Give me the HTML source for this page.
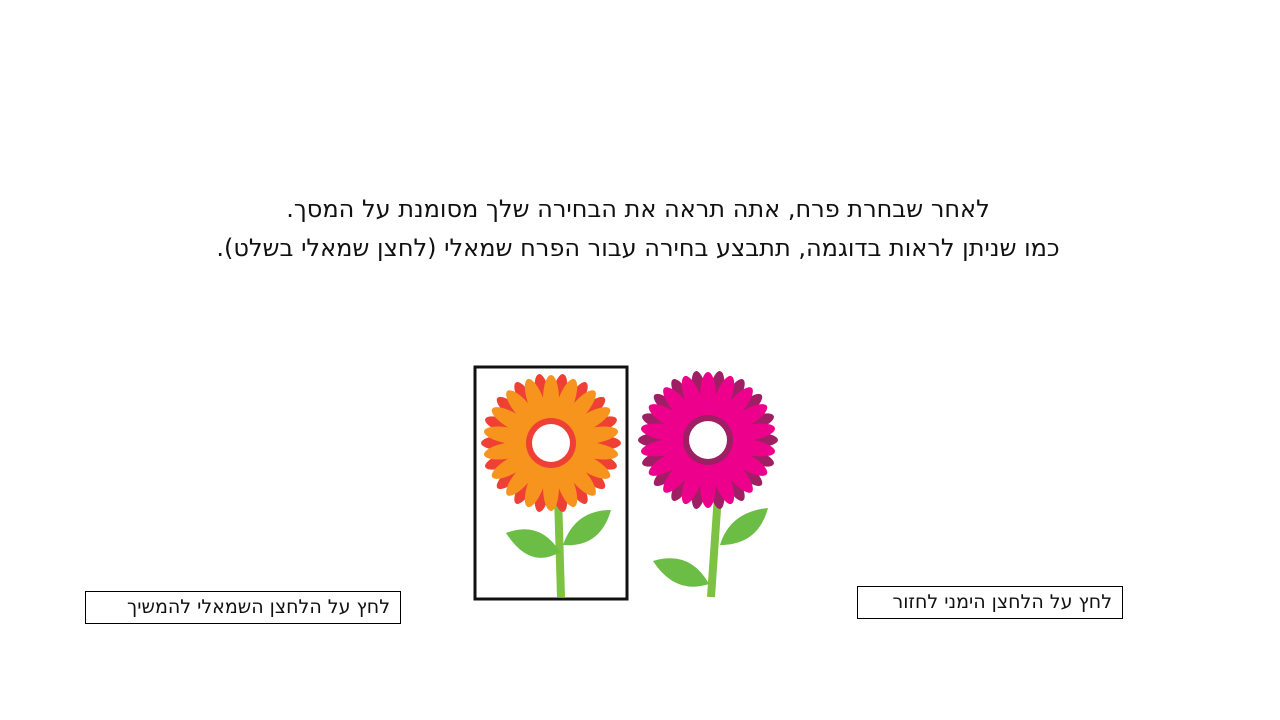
<!DOCTYPE html>
<html><head><meta charset="utf-8"><style>
body{margin:0;width:1280px;height:720px;background:#fff;position:relative;overflow:hidden;font-family:"DejaVu Sans","Liberation Sans",sans-serif;color:#111}
.t{position:absolute;left:0;width:1276px;text-align:center;direction:rtl;font-size:24px}
.b{position:absolute;border:1px solid #000;direction:rtl;font-size:19px;box-sizing:border-box;padding-right:10px;line-height:30px}
</style></head><body>
<div class="t" style="top:195px">לאחר שבחרת פרח, אתה תראה את הבחירה שלך מסומנת על המסך.</div>
<div class="t" style="top:234px">כמו שניתן לראות בדוגמה, תתבצע בחירה עבור הפרח שמאלי (לחצן שמאלי בשלט).</div>
<div class="b" style="left:85px;top:591px;width:316px;height:33px">לחץ על הלחצן השמאלי להמשיך</div>
<div class="b" style="left:857px;top:586px;width:266px;height:33px">לחץ על הלחצן הימני לחזור</div>
<svg width="1280" height="720" style="position:absolute;left:0;top:0">
<rect x="475" y="367" width="152" height="232" fill="none" stroke="#111" stroke-width="3"/>
<path d="M558 495 L561 597" stroke="#7dc242" stroke-width="8"/>
<path d="M506 533 Q540 520 560 552 Q530 570 506 533Z" fill="#6cbd45"/>
<path d="M563 545 Q575 510 611 510 Q600 548 563 545Z" fill="#6cbd45"/>
<path d="M718 495 L711 597" stroke="#7dc242" stroke-width="8"/>
<path d="M653 561 Q690 550 709 584 Q675 595 653 561Z" fill="#6cbd45"/>
<path d="M720 545 Q730 512 768 508 Q758 545 720 545Z" fill="#6cbd45"/>
<g transform="translate(551,443)">
<g fill="#ee4035">
<ellipse rx="7" ry="20" cy="-50" transform="rotate(10)"/><ellipse rx="7" ry="20" cy="-50" transform="rotate(30)"/><ellipse rx="7" ry="20" cy="-50" transform="rotate(50)"/><ellipse rx="7" ry="20" cy="-50" transform="rotate(70)"/><ellipse rx="7" ry="20" cy="-50" transform="rotate(90)"/><ellipse rx="7" ry="20" cy="-50" transform="rotate(110)"/><ellipse rx="7" ry="20" cy="-50" transform="rotate(130)"/><ellipse rx="7" ry="20" cy="-50" transform="rotate(150)"/><ellipse rx="7" ry="20" cy="-50" transform="rotate(170)"/><ellipse rx="7" ry="20" cy="-50" transform="rotate(190)"/><ellipse rx="7" ry="20" cy="-50" transform="rotate(210)"/><ellipse rx="7" ry="20" cy="-50" transform="rotate(230)"/><ellipse rx="7" ry="20" cy="-50" transform="rotate(250)"/><ellipse rx="7" ry="20" cy="-50" transform="rotate(270)"/><ellipse rx="7" ry="20" cy="-50" transform="rotate(290)"/><ellipse rx="7" ry="20" cy="-50" transform="rotate(310)"/><ellipse rx="7" ry="20" cy="-50" transform="rotate(330)"/><ellipse rx="7" ry="20" cy="-50" transform="rotate(350)"/>
</g>
<g fill="#f7941d">
<circle r="34"/>
<ellipse rx="8" ry="24" cy="-44" transform="rotate(0)"/><ellipse rx="8" ry="24" cy="-44" transform="rotate(20)"/><ellipse rx="8" ry="24" cy="-44" transform="rotate(40)"/><ellipse rx="8" ry="24" cy="-44" transform="rotate(60)"/><ellipse rx="8" ry="24" cy="-44" transform="rotate(80)"/><ellipse rx="8" ry="24" cy="-44" transform="rotate(100)"/><ellipse rx="8" ry="24" cy="-44" transform="rotate(120)"/><ellipse rx="8" ry="24" cy="-44" transform="rotate(140)"/><ellipse rx="8" ry="24" cy="-44" transform="rotate(160)"/><ellipse rx="8" ry="24" cy="-44" transform="rotate(180)"/><ellipse rx="8" ry="24" cy="-44" transform="rotate(200)"/><ellipse rx="8" ry="24" cy="-44" transform="rotate(220)"/><ellipse rx="8" ry="24" cy="-44" transform="rotate(240)"/><ellipse rx="8" ry="24" cy="-44" transform="rotate(260)"/><ellipse rx="8" ry="24" cy="-44" transform="rotate(280)"/><ellipse rx="8" ry="24" cy="-44" transform="rotate(300)"/><ellipse rx="8" ry="24" cy="-44" transform="rotate(320)"/><ellipse rx="8" ry="24" cy="-44" transform="rotate(340)"/>
</g>
<circle r="25" fill="#ee4035"/><circle r="19" fill="#fff"/>
</g>
<g transform="translate(708,440)">
<g fill="#9e1f63">
<ellipse rx="7" ry="20" cy="-50" transform="rotate(10)"/><ellipse rx="7" ry="20" cy="-50" transform="rotate(30)"/><ellipse rx="7" ry="20" cy="-50" transform="rotate(50)"/><ellipse rx="7" ry="20" cy="-50" transform="rotate(70)"/><ellipse rx="7" ry="20" cy="-50" transform="rotate(90)"/><ellipse rx="7" ry="20" cy="-50" transform="rotate(110)"/><ellipse rx="7" ry="20" cy="-50" transform="rotate(130)"/><ellipse rx="7" ry="20" cy="-50" transform="rotate(150)"/><ellipse rx="7" ry="20" cy="-50" transform="rotate(170)"/><ellipse rx="7" ry="20" cy="-50" transform="rotate(190)"/><ellipse rx="7" ry="20" cy="-50" transform="rotate(210)"/><ellipse rx="7" ry="20" cy="-50" transform="rotate(230)"/><ellipse rx="7" ry="20" cy="-50" transform="rotate(250)"/><ellipse rx="7" ry="20" cy="-50" transform="rotate(270)"/><ellipse rx="7" ry="20" cy="-50" transform="rotate(290)"/><ellipse rx="7" ry="20" cy="-50" transform="rotate(310)"/><ellipse rx="7" ry="20" cy="-50" transform="rotate(330)"/><ellipse rx="7" ry="20" cy="-50" transform="rotate(350)"/>
</g>
<g fill="#ec008c">
<circle r="34"/>
<ellipse rx="8" ry="24" cy="-44" transform="rotate(0)"/><ellipse rx="8" ry="24" cy="-44" transform="rotate(20)"/><ellipse rx="8" ry="24" cy="-44" transform="rotate(40)"/><ellipse rx="8" ry="24" cy="-44" transform="rotate(60)"/><ellipse rx="8" ry="24" cy="-44" transform="rotate(80)"/><ellipse rx="8" ry="24" cy="-44" transform="rotate(100)"/><ellipse rx="8" ry="24" cy="-44" transform="rotate(120)"/><ellipse rx="8" ry="24" cy="-44" transform="rotate(140)"/><ellipse rx="8" ry="24" cy="-44" transform="rotate(160)"/><ellipse rx="8" ry="24" cy="-44" transform="rotate(180)"/><ellipse rx="8" ry="24" cy="-44" transform="rotate(200)"/><ellipse rx="8" ry="24" cy="-44" transform="rotate(220)"/><ellipse rx="8" ry="24" cy="-44" transform="rotate(240)"/><ellipse rx="8" ry="24" cy="-44" transform="rotate(260)"/><ellipse rx="8" ry="24" cy="-44" transform="rotate(280)"/><ellipse rx="8" ry="24" cy="-44" transform="rotate(300)"/><ellipse rx="8" ry="24" cy="-44" transform="rotate(320)"/><ellipse rx="8" ry="24" cy="-44" transform="rotate(340)"/>
</g>
<circle r="25" fill="#9e1f63"/><circle r="19" fill="#fff"/>
</g>
</svg>
</body></html>
